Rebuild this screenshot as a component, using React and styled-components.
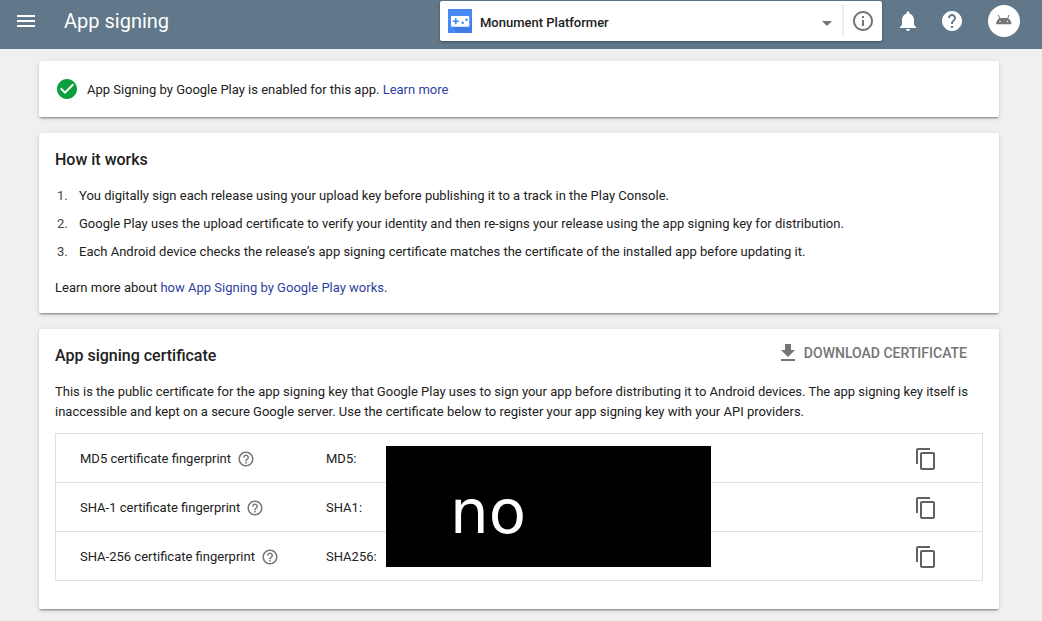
import React from "react";
import styled, { createGlobalStyle } from "styled-components";
import {
  MdMenu,
  MdArrowDropDown,
  MdInfoOutline,
  MdNotifications,
  MdHelp,
  MdHelpOutline,
  MdCheckCircle,
  MdContentCopy,
} from "react-icons/md";

const GlobalStyle = createGlobalStyle`
  * { box-sizing: border-box; }
  body {
    margin: 0;
    background: #f0f0f0;
    color: #212121;
    font: 13px/20px Roboto, "Liberation Sans", sans-serif;
    overflow: hidden;
  }
  svg { display: block; flex: none; }
`;

const Header = styled.header`
  display: flex;
  height: 49px;
  padding: 1px 22px 0 14px;
  background: #607889;
  color: #fff;
`;

const HeaderIcon = styled.span`
  margin-top: 8px;
  margin-left: ${(p) => p.$gap || 0}px;
  font-size: 24px;
  height: 24px;
`;

const PageTitle = styled.h1`
  width: 376px;
  margin: 8px 0 0 26px;
  font-size: 20px;
  line-height: 24px;
  font-weight: 400;
`;

const AppPicker = styled.div`
  display: flex;
  width: 442px;
  height: 40px;
  padding: 0 7px 0 8px;
  align-items: center;
  background: #fff;
  border-radius: 2px;
  box-shadow: 0 1px 3px rgba(0, 0, 0, 0.35);
  color: #757575;
  font-size: 24px;
`;

const AppName = styled.span`
  flex: 1;
  margin: 3px 0 0 8px;
  color: #212121;
  font-size: 13px;
  line-height: 20px;
  font-weight: 500;
`;

const PickerArrow = styled.span`
  margin-top: 4px;
`;

const PickerDivider = styled.span`
  width: 2px;
  height: 32px;
  margin: 0 7px 0 3px;
  background: #eee;
`;

const Avatar = styled.span`
  width: 32px;
  height: 32px;
  margin: 4px 0 0 24px;
  border-radius: 50%;
  background: #fff;
`;

const Main = styled.main`
  display: flex;
  flex-direction: column;
  gap: 16px;
  padding: 12px 43px 12px 39px;
`;

const Card = styled.section`
  height: ${(p) => p.$height}px;
  padding: 16px;
  background: #fff;
  border-radius: 2px;
  box-shadow: 0 2px 2px rgba(0, 0, 0, 0.14), 0 3px 1px -2px rgba(0, 0, 0, 0.2),
    0 1px 5px rgba(0, 0, 0, 0.12);
`;

const StatusLine = styled.div`
  display: flex;
  align-items: center;
  gap: 8px;
  height: 24px;
  svg { font-size: 24px; color: #0a9f3c; }
`;

const StatusText = styled.span`
  padding-top: 2px;
`;

const Link = styled.a`
  color: #303f9f;
`;

const CardTitle = styled.h2`
  margin: 0;
  padding-top: 1px;
  font-size: 16px;
  line-height: 20px;
  font-weight: 500;
`;

const Steps = styled.ol`
  margin: 16px 0 0;
  padding: 0;
  list-style: none;
  counter-reset: step;
`;

const Step = styled.li`
  display: flex;
  height: 28px;
  counter-increment: step;
  &::before {
    content: counter(step) ".";
    width: 22px;
    margin-left: 2px;
    color: #424242;
  }
`;

const Paragraph = styled.p`
  margin: ${(p) => p.$top}px 0 0;
`;

const CardHead = styled.div`
  display: flex;
  justify-content: space-between;
  height: 20px;
`;

const DownloadButton = styled.button`
  display: flex;
  align-items: center;
  gap: 4px;
  height: 24px;
  margin: -4px 16px 0 0;
  padding: 0;
  border: 0;
  background: none;
  color: #757575;
  font: 500 14px/24px Roboto, sans-serif;
`;

const Fingerprints = styled.div`
  position: relative;
  margin: 11px 0 0;
  width: 928px;
  border: 1px solid #e0e0e0;
`;

const FingerprintRow = styled.div`
  display: flex;
  align-items: center;
  height: 48px;
  padding: 0 44px 0 24px;
  & + & { height: 49px; border-top: 1px solid #e0e0e0; }
`;

const RowLabel = styled.span`
  display: flex;
  align-items: center;
  gap: 6px;
  width: 246px;
  padding-top: 1px;
  svg { font-size: 18px; color: #757575; }
`;

const RowValue = styled.span`
  flex: 1;
  padding-top: 1px;
`;

const CopyIcon = styled(MdContentCopy)`
  font-size: 24px;
  margin-top: 2px;
  color: #616161;
`;

const Redaction = styled.div`
  position: absolute;
  left: 330px;
  top: 12px;
  width: 325px;
  height: 121px;
  padding: 30px 0 0 64px;
  background: #000;
  color: #fff;
  font: 61px/71px "DejaVu Sans", sans-serif;
`;

const GameIcon = () => (
  <svg width="24" height="24" viewBox="0 0 24 24">
    <path fill="#4688f4" d="M0 0h24v24H0z" />
    <path fill="#3f7de6" d="M3.500 17.500L10 24h14V10l-3-3z" />
    <rect x="3" y="7" width="18.300" height="10.700" rx="1" fill="#fff" />
    <path fill="#4285f4" d="M7 9.300h1.600v2.200h2.200v1.600H8.600v2.200H7v-2.200H4.800v-1.600H7z" />
    <circle cx="14.700" cy="13.700" r="1.200" fill="#4285f4" />
    <circle cx="18.500" cy="10.700" r="1.200" fill="#4285f4" />
  </svg>
);

const AndroidHead = () => (
  <svg width="32" height="32" viewBox="0 0 32 32">
    <path d="M12 14l-1.700-4M19.500 14l1.500-4" stroke="#757575" strokeWidth="1" />
    <path fill="#757575" d="M8 19.300c.2-2.800 1.500-5.300 4-6.300h7.500c2.500 1 3.700 3.500 4 6.300z" />
    <circle cx="12" cy="16.500" r=".7" fill="#fff" />
    <circle cx="19.600" cy="16.500" r=".7" fill="#fff" />
  </svg>
);

const DownloadIcon = () => (
  <svg width="24" height="24" viewBox="0 0 24 24" fill="currentColor">
    <path d="M19 9h-4V3H9v6H5l7 7 7-7zM5 18v2h14v-2H5z" />
  </svg>
);

const rows = [
  ["MD5 certificate fingerprint", "MD5:"],
  ["SHA-1 certificate fingerprint", "SHA1:"],
  ["SHA-256 certificate fingerprint", "SHA256:"],
];

export default function App() {
  return (
    <>
      <GlobalStyle />
      <Header>
        <HeaderIcon><MdMenu /></HeaderIcon>
        <PageTitle>App signing</PageTitle>
        <AppPicker>
          <GameIcon />
          <AppName>Monument Platformer</AppName>
          <PickerArrow><MdArrowDropDown /></PickerArrow>
          <PickerDivider />
          <MdInfoOutline />
        </AppPicker>
        <HeaderIcon $gap={14}><MdNotifications /></HeaderIcon>
        <HeaderIcon $gap={20}><MdHelp /></HeaderIcon>
        <Avatar><AndroidHead /></Avatar>
      </Header>
      <Main>
        <Card $height={56}>
          <StatusLine>
            <MdCheckCircle />
            <StatusText>
              App Signing by Google Play is enabled for this app. <Link>Learn more</Link>
            </StatusText>
          </StatusLine>
        </Card>
        <Card $height={180}>
          <CardTitle>How it works</CardTitle>
          <Steps>
            <Step>You digitally sign each release using your upload key before publishing it to a track in the Play Console.</Step>
            <Step>Google Play uses the upload certificate to verify your identity and then re-signs your release using the app signing key for distribution.</Step>
            <Step>Each Android device checks the release’s app signing certificate matches the certificate of the installed app before updating it.</Step>
          </Steps>
          <Paragraph $top={8}>
            Learn more about <Link>how App Signing by Google Play works</Link>.
          </Paragraph>
        </Card>
        <Card $height={280}>
          <CardHead>
            <CardTitle>App signing certificate</CardTitle>
            <DownloadButton>
              <DownloadIcon />
              DOWNLOAD CERTIFICATE
            </DownloadButton>
          </CardHead>
          <Paragraph $top={17}>
            This is the public certificate for the app signing key that Google Play uses to sign your app before
            distributing it to Android devices. The app signing key itself is inaccessible and kept on a secure Google
            server. Use the certificate below to register your app signing key with your API providers.
          </Paragraph>
          <Fingerprints>
            {rows.map(([label, value]) => (
              <FingerprintRow key={label}>
                <RowLabel>
                  {label}
                  <MdHelpOutline />
                </RowLabel>
                <RowValue>{value}</RowValue>
                <CopyIcon />
              </FingerprintRow>
            ))}
            <Redaction>no</Redaction>
          </Fingerprints>
        </Card>
      </Main>
    </>
  );
}
